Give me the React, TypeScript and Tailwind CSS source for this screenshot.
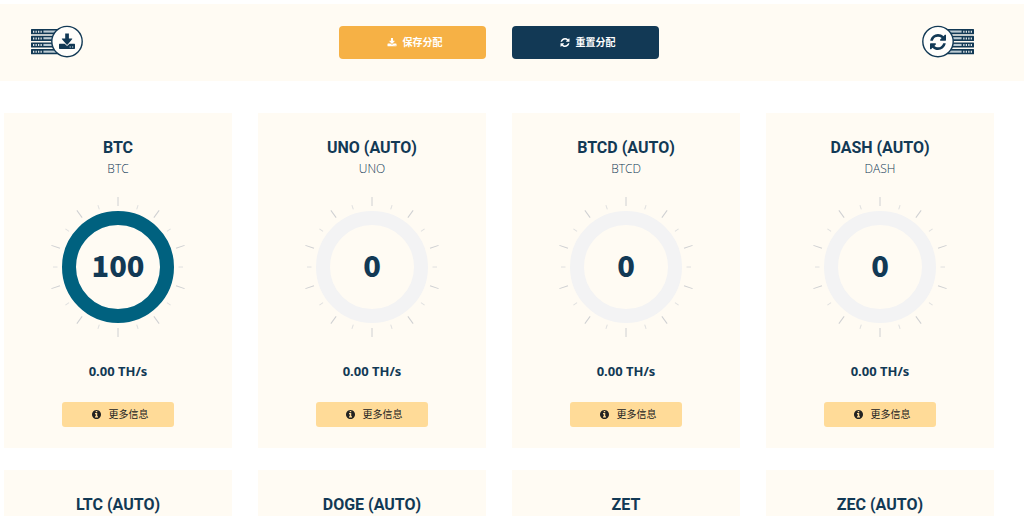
import { useState } from 'react';
import type { ReactNode } from 'react';

const ICONS = {
  download: {
    viewBox: '0 0 1792 1664',
    path: 'M1344 1344q0-26-19-45t-45-19-45 19-19 45 19 45 45 19 45-19 19-45zm256 0q0-26-19-45t-45-19-45 19-19 45 19 45 45 19 45-19 19-45zm128-224v320q0 40-28 68t-68 28h-1472q-40 0-68-28t-28-68v-320q0-40 28-68t68-28h465l135 136q58 56 136 56t136-56l136-136h464q40 0 68 28t28 68zm-325-569q17 41-14 70l-448 448q-18 19-45 19t-45-19l-448-448q-31-29-14-70 17-39 59-39h256v-448q0-26 19-45t45-19h256q26 0 45 19t19 45v448h256q42 0 59 39z',
  },
  refresh: {
    viewBox: '0 0 1536 1536',
    path: 'M1511 928q0 5-1 7-64 268-268 434.5t-478 166.5q-146 0-282.5-55t-243.5-157l-129 129q-19 19-45 19t-45-19-19-45v-448q0-26 19-45t45-19h448q26 0 45 19t19 45-19 45l-137 137q71 66 161 102t187 36q134 0 250-65t186-179q11-17 53-117 8-23 30-23h192q13 0 22.5 9.5t9.5 22.5zm25-800v448q0 26-19 45t-45 19h-448q-26 0-45-19t-19-45 19-45l138-138q-148-137-349-137-134 0-250 65t-186 179q-11 17-53 117-8 23-30 23h-199q-13 0-22.5-9.5t-9.5-22.5v-7q65-268 270-434.5t480-166.5q146 0 284 55.5t245 156.5l130-129q19-19 45-19t45 19 19 45z',
  },
  info: {
    viewBox: '128 128 1536 1536',
    path: 'M1152 1376v-160q0-14-9-23t-23-9h-96v-512q0-14-9-23t-23-9h-320q-14 0-23 9t-9 23v160q0 14 9 23t23 9h96v320h-96q-14 0-23 9t-9 23v160q0 14 9 23t23 9h448q14 0 23-9t9-23zm-128-896v-160q0-14-9-23t-23-9h-192q-14 0-23 9t-9 23v160q0 14 9 23t23 9h192q14 0 23-9t9-23zm640 416q0 209-103 385.5t-279.5 279.5-385.5 103-385.5-103-279.5-279.5-103-385.5 103-385.5 279.5-279.5 385.5-103 385.5 103 279.5 279.5 103 385.5z',
  },
};

interface Pool {
  title: string;
  coin: string;
  share: number;
}

const POOLS: Pool[] = [
  { title: 'BTC', coin: 'BTC', share: 100 },
  { title: 'UNO (AUTO)', coin: 'UNO', share: 0 },
  { title: 'BTCD (AUTO)', coin: 'BTCD', share: 0 },
  { title: 'DASH (AUTO)', coin: 'DASH', share: 0 },
  { title: 'LTC (AUTO)', coin: 'LTC', share: 0 },
  { title: 'DOGE (AUTO)', coin: 'DOGE', share: 0 },
  { title: 'ZET', coin: 'ZET', share: 0 },
  { title: 'ZEC (AUTO)', coin: 'ZEC', share: 0 },
];

const initialShares = () => Object.fromEntries(POOLS.map((p) => [p.coin, p.share]));

export default function App() {
  const [shares, setShares] = useState<Record<string, number>>(initialShares);

  return (
    <div className="min-h-screen bg-white pt-1 font-['Open_Sans','Noto_Sans_CJK_SC',sans-serif] text-[#123955]">
      <header className="grid grid-cols-[1fr_auto_1fr] items-center bg-[#fffbf3] pt-[21px] pr-[30px] pb-[22px] pl-1">
        <ServerBadge className="ml-[27px]" icon="download" />
        <div className="flex gap-[26px]">
          <HeaderButton className="bg-[#f6b145]" icon="download">
            保存分配
          </HeaderButton>
          <HeaderButton
            className="bg-[#123955]"
            icon="refresh"
            onClick={() => setShares(initialShares())}
          >
            重置分配
          </HeaderButton>
        </div>
        <ServerBadge className="mr-5 justify-self-end" icon="refresh" flipped />
      </header>

      <main className="mt-8 grid grid-cols-4 gap-x-[26px] gap-y-[22px] pr-[30px] pl-1">
        {POOLS.map((pool) => (
          <PoolCard
            key={pool.coin}
            pool={pool}
            share={shares[pool.coin]}
            onChange={(share) => setShares({ ...shares, [pool.coin]: share })}
          />
        ))}
      </main>
    </div>
  );
}

function Icon({ name, className }: { name: keyof typeof ICONS; className?: string }) {
  return (
    <svg className={className} viewBox={ICONS[name].viewBox} fill="currentColor" aria-hidden="true">
      <path d={ICONS[name].path} />
    </svg>
  );
}

function HeaderButton({
  icon,
  className,
  onClick,
  children,
}: {
  icon: keyof typeof ICONS;
  className: string;
  onClick?: () => void;
  children: ReactNode;
}) {
  return (
    <button
      type="button"
      onClick={onClick}
      className={`flex h-[33px] w-[147px] items-center justify-center gap-1.5 rounded pt-px pl-1 text-[10px] font-bold text-white ${className}`}
    >
      <Icon name={icon} className="h-[9px] w-[10px]" />
      {children}
    </button>
  );
}

// A rack of four servers with a round badge on one end. The flipped version
// mirrors the rack only, so the glyph keeps its direction.
function ServerBadge({
  icon,
  flipped = false,
  className,
}: {
  icon: 'download' | 'refresh';
  flipped?: boolean;
  className?: string;
}) {
  return (
    <svg className={className} width="52" height="34" viewBox="0 0 52 34" aria-hidden="true">
      <g transform={flipped ? 'translate(52 0) scale(-1 1)' : undefined}>
        {[0, 1, 2, 3].map((i) => (
          <g key={i} transform={`translate(0 ${4 + i * 6.7})`}>
            <rect width="30" height="5.2" rx="0.5" fill="#123955" />
            <path
              d="M2 1.7h1.3v2H2zM4.5 1.7h1.3v2H4.5zM7 1.7h1.3v2H7zM9.5 1.7h1.3v2H9.5z"
              fill="#dfe5e6"
            />
            <path d="M12.4 1.5h16v2.1h-16z" fill="#bccbd3" />
          </g>
        ))}
        <circle cx="36" cy="16.6" r="15.2" fill="#fffefb" stroke="#123955" strokeWidth="1.4" />
      </g>
      {icon === 'download' ? (
        <g fill="#123955">
          <path d="M28.6 18.7h14.8q.6 0 .6.6v4q0 .7-.7.7H28.7q-.7 0-.7-.7v-4q0-.6.6-.6z" />
          <path
            d="M34.2 8.6h3.7v5h3q.8 0 .2.7l-4.4 5.2q-.6.7-1.2 0l-4.5-5.2q-.6-.7.2-.7h3z"
            stroke="#fffefb"
            strokeWidth="1.6"
            paintOrder="stroke"
          />
          <path d="M38.6 21.4h1.2v1.1h-1.2zM41 21.4h1.2v1.1H41z" fill="#dfe5e6" />
        </g>
      ) : (
        <svg x="8" y="9" width="16" height="16" viewBox={ICONS.refresh.viewBox}>
          <path d={ICONS.refresh.path} fill="#123955" />
        </svg>
      )}
    </svg>
  );
}

function PoolCard({
  pool,
  share,
  onChange,
}: {
  pool: Pool;
  share: number;
  onChange: (share: number) => void;
}) {
  return (
    <section className="flex flex-col items-center bg-[#fffbf3] pt-6 pb-[21px]">
      <h2 className="font-['Roboto',sans-serif] text-base leading-[22px] font-bold">{pool.title}</h2>
      <p className="text-xs leading-5 font-light">{pool.coin}</p>
      <Dial label={pool.title} value={share} onChange={onChange} />
      <p className="mt-6 font-['Noto_Sans',sans-serif] text-[13px] leading-5 font-bold">0.00 TH/s</p>
      <button
        type="button"
        className="mt-[21px] flex h-[25px] w-28 items-center justify-center gap-2 rounded-[3px] bg-[#ffdb98] pl-1 text-[10px] text-[#222]"
      >
        <Icon name="info" className="size-[9px]" />
        更多信息
      </button>
    </section>
  );
}

function Dial({
  label,
  value,
  onChange,
}: {
  label: string;
  value: number;
  onChange: (value: number) => void;
}) {
  return (
    <div className="mt-[18px] grid place-items-center *:col-start-1 *:row-start-1">
      <svg width="140" height="140" viewBox="-70 -70 140 140" fill="none" aria-hidden="true">
        {Array.from({ length: 20 }).map((_, i) => (
          <path
            key={i}
            d={i % 2 === 0 ? 'M0-61V-70' : 'M0-60.5V-65'}
            stroke={i % 2 === 0 ? '#cfd0d2' : '#e0e0e0'}
            transform={`rotate(${i * 18})`}
          />
        ))}
        <circle r="49" stroke="#f3f3f4" strokeWidth="14" />
        <circle
          r="49"
          stroke="#00617f"
          strokeWidth="14"
          pathLength="100"
          strokeDasharray={`${value} 100`}
          strokeOpacity={value > 0 ? 1 : 0}
          transform="rotate(-90)"
        />
      </svg>
      <input
        type="text"
        inputMode="numeric"
        aria-label={label}
        value={value}
        onChange={(e) => onChange(Math.min(100, Number(e.target.value.replace(/\D/g, ''))))}
        className="w-16 bg-transparent pb-1.5 text-center font-['Noto_Sans_CJK_SC',sans-serif] text-[29px] leading-9 font-black outline-none"
      />
    </div>
  );
}
